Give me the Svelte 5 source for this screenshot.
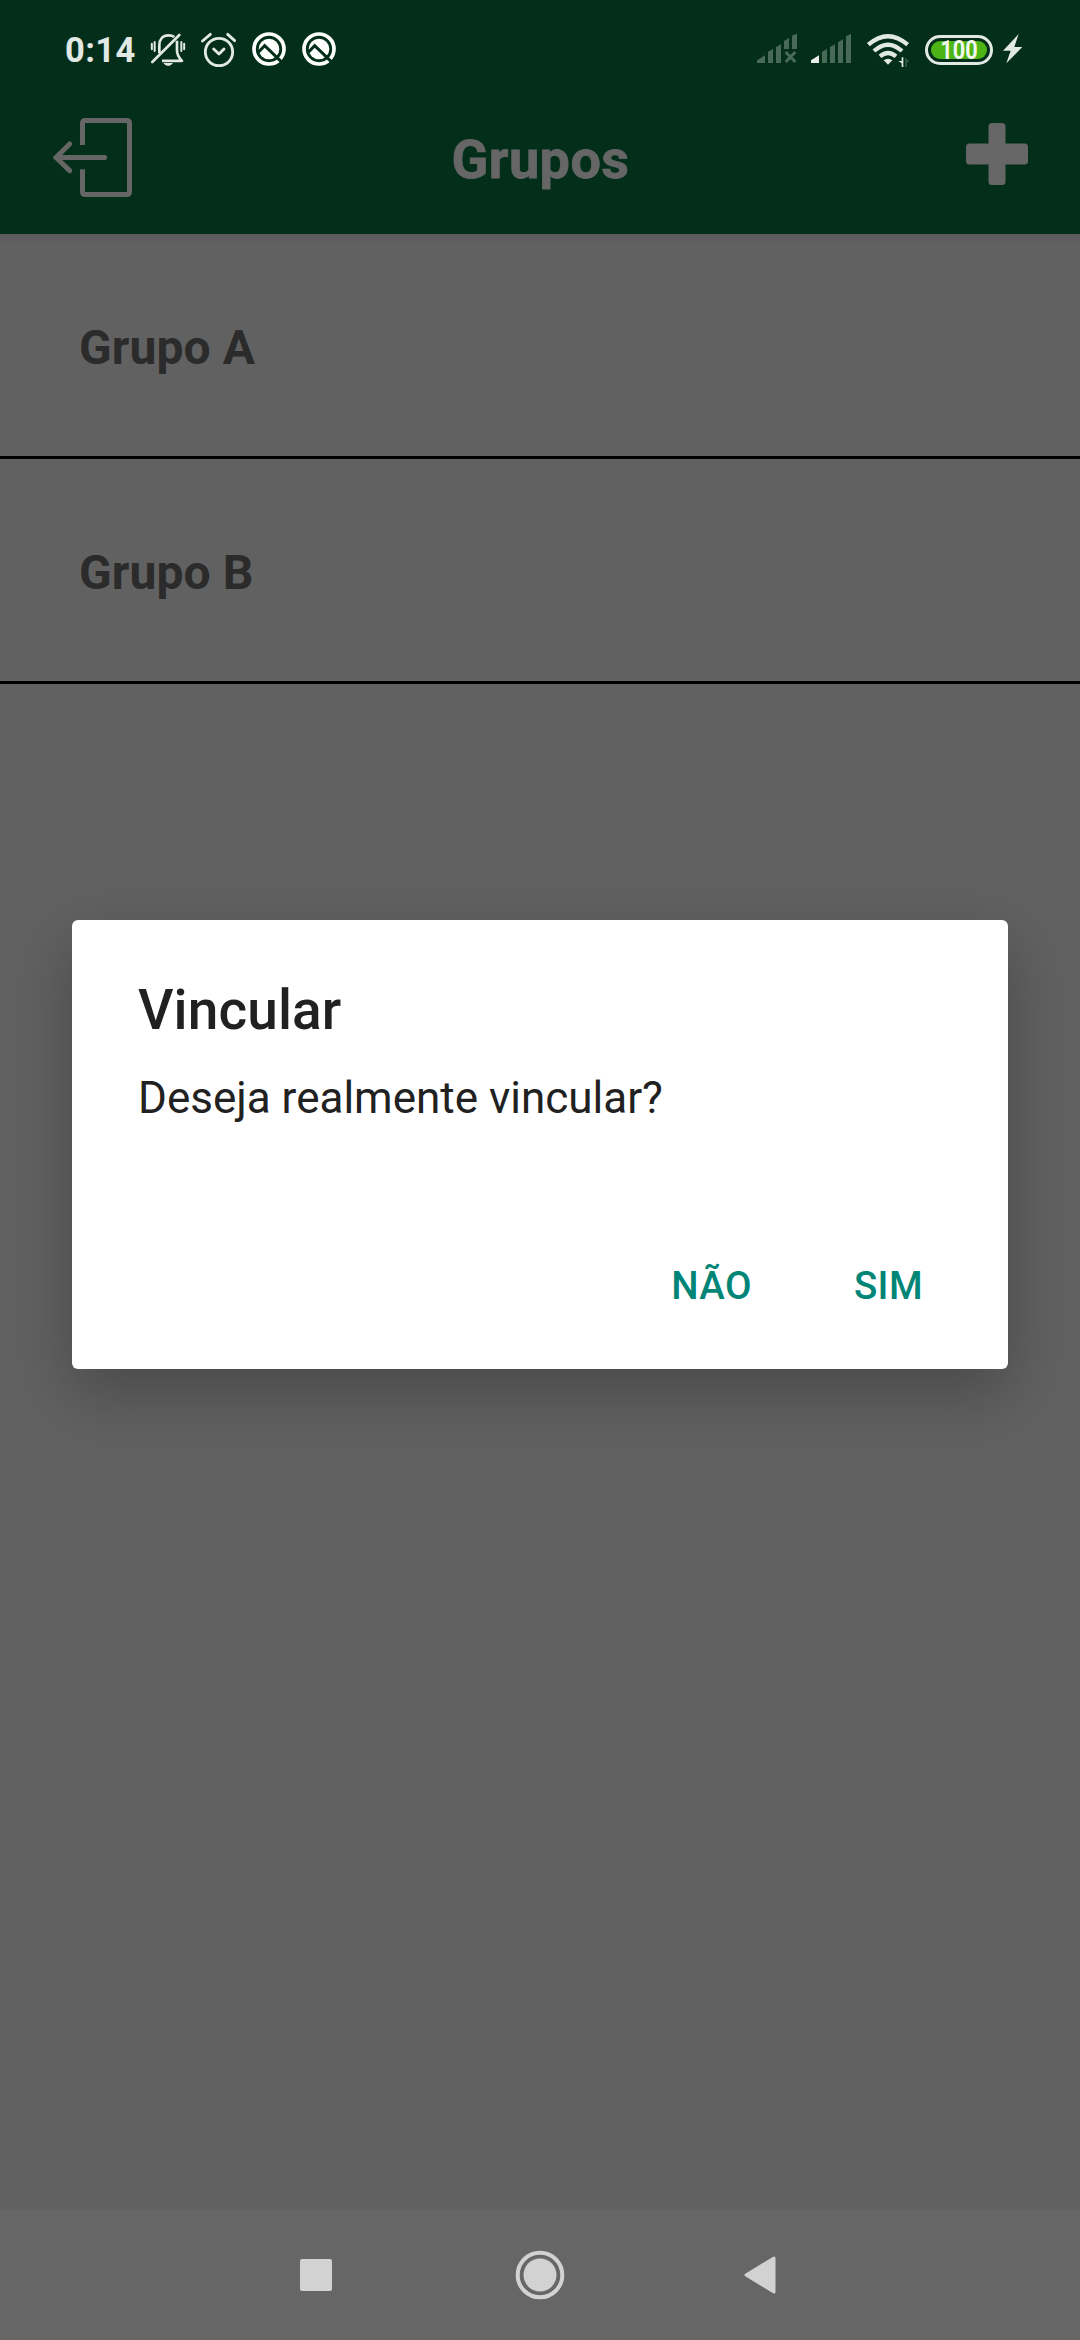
<script>
  const groups = ['Grupo A', 'Grupo B'];
  const notifications = [0, 1];
</script>

<div class="screen">
  <header>
    <div class="status">
      <span class="time">0:14</span>
      <svg class="bell" viewBox="330 60 108 120" width="36" height="40">
        <g fill="none" stroke="#e2e8e4" stroke-width="8">
          <path d="M358 130V106C358 88 368 76 385 76C392 76 398 77 403 81M411 92V122C411 134 416 142 426 152.500H366" stroke-linejoin="round" />
          <path d="M337 156L418 75" stroke-linecap="round" />
          <path d="M335.500 101v17M344 96v27M424 96v27M432.500 101v17" stroke-width="6" stroke-linecap="round" />
        </g>
        <path d="M370 159H399Q393 168 384.500 168Q376 168 370 159Z" fill="#e2e8e4" />
      </svg>
      <svg class="alarm" viewBox="480 60 111 120" width="37" height="40">
        <g fill="none" stroke="#e2e8e4" stroke-width="8.500" stroke-linecap="round" stroke-linejoin="round">
          <circle cx="537" cy="126" r="41" />
          <path d="M521 117L537 132L552 117M487.500 93L511 73M563 73L584 92" />
        </g>
      </svg>
      {#each notifications as n (n)}
        <svg class="badge" viewBox="636 60 102 120" width="34" height="40">
          <circle cx="687" cy="117" r="45" fill="none" stroke="#fff" stroke-width="11" />
          <circle cx="687" cy="117" r="31" fill="#fff" />
          <path d="M655 127L674 107L730 161" fill="none" stroke="#032f1a" stroke-width="9" />
        </svg>
      {/each}

      <div class="right">
        <svg class="signal" viewBox="48 60 126 120" width="42" height="40" fill="#4a6a58">
          <path d="M51 159V151L75 136V159ZM84 159V125L99 117V159ZM108 159V111L123 103V159ZM132 117V93L147 84V117ZM156 117V77L171 71V117Z" />
          <path d="M137 126L166 156M166 126L137 156" stroke="#4a6a58" stroke-width="9" />
        </svg>
        <svg class="signal" viewBox="210 60 126 120" width="42" height="40" fill="#4a6a58">
          <path d="M213 159V151L237 136V159Z" fill="#e8eeea" />
          <path d="M246 159V125L261 117V159ZM270 159V111L285 103V159ZM294 159V97L309 88V159ZM318 159V79L333 71V159Z" />
        </svg>
        <svg class="wifi" viewBox="378 60 132 120" width="44" height="40">
          <g fill="none" stroke="#e2e8e4" stroke-width="13">
            <path d="M385 104Q444 53 503 104M402 123Q444 85 486 123M420 139Q444 119 468 139" />
          </g>
          <path d="M431 151Q444 142 457 151L444 164Z" fill="#e2e8e4" />
          <path d="M485 142H490V171H485V160L475 153H485Z" fill="#e2e8e4" />
          <path d="M496 142L508 156H501V171H496Z" fill="#365846" />
        </svg>
        <div class="battery"><div class="level"><span>100</span></div></div>
        <svg class="bolt" viewBox="786 60 63 120" width="21" height="40">
          <path d="M836 72L789 122H812L799 160L847 111H823Z" fill="#e2e8e4" />
        </svg>
      </div>
    </div>

    <div class="bar">
      <svg class="exit" viewBox="69 54 237 237" width="79" height="79">
        <g fill="none" stroke="#666" stroke-width="15">
          <path d="M157.500 135V70Q157.500 61.500 166 61.500H290Q298.500 61.500 298.500 70V275Q298.500 283.500 290 283.500H166Q157.500 283.500 157.500 275V208" />
          <path d="M78 172.500H224M119 132L78 172.500L119 212" stroke-linecap="round" />
        </g>
      </svg>
      <h1>Grupos</h1>
      <svg class="plus" viewBox="0 0 62 62" width="62" height="62" fill="#666">
        <rect x="22.500" y="0" width="17" height="62" rx="3.500" />
        <rect x="0" y="20.500" width="62" height="21" rx="3.500" />
      </svg>
    </div>
  </header>

  <main>
    {#each groups as group (group)}
      <div class="row">{group}</div>
    {/each}
  </main>

  <nav>
    <svg viewBox="0 0 32 32" width="32" height="32"><rect width="32" height="32" rx="2" fill="#d2d2d2" /></svg>
    <svg class="home" viewBox="0 0 50 50" width="50" height="50">
      <circle cx="25" cy="25" r="22.300" fill="none" stroke="#d2d2d2" stroke-width="4" />
      <circle cx="25" cy="25" r="16.500" fill="#d2d2d2" />
    </svg>
    <svg viewBox="0 0 32 38" width="32" height="38">
      <path d="M2 19L30 2V36Z" fill="#d2d2d2" stroke="#d2d2d2" stroke-width="3" stroke-linejoin="round" />
    </svg>
  </nav>

  <section class="dialog" role="alertdialog">
    <h2>Vincular</h2>
    <p>Deseja realmente vincular?</p>
    <div class="actions">
      <button>NÃO</button>
      <button>SIM</button>
    </div>
  </section>
</div>

<style>
  :global(body) {
    margin: 0;
    background: #616161;
  }
  .screen {
    position: relative;
    display: flex;
    flex-direction: column;
    width: 1080px;
    height: 2340px;
    overflow: hidden;
    background: #616161;
    font-family: Roboto, sans-serif;
  }
  svg {
    display: block;
    flex: none;
  }
  header {
    height: 234px;
    background: #032f1a;
  }
  .status {
    display: flex;
    align-items: center;
    box-sizing: border-box;
    height: 100px;
    padding: 0 57px 0 65px;
  }
  .time {
    width: 85px;
    font-size: 34.5px;
    font-weight: 700;
    letter-spacing: 0.4px;
    color: #e2e8e4;
  }
  .alarm {
    margin-left: 14px;
  }
  .badge {
    margin-left: 16px;
  }
  .alarm + .badge {
    margin-left: 15px;
  }
  .right {
    display: flex;
    align-items: center;
    margin-left: auto;
  }
  .signal + .signal {
    margin-left: 12px;
  }
  .wifi {
    margin-left: 14px;
  }
  .battery {
    box-sizing: border-box;
    width: 68px;
    height: 30px;
    margin: 0 9px 0 15px;
    padding: 3px;
    border: 3px solid #e2e8e4;
    border-radius: 15px;
  }
  .level {
    display: flex;
    justify-content: center;
    height: 18px;
    border-radius: 9px;
    background: #4cb515;
  }
  .level span {
    color: #f2f8ee;
    font-size: 25.5px;
    font-weight: 700;
    line-height: 19px;
    transform: scaleX(0.85);
  }
  .bar {
    display: grid;
    grid-template-columns: 1fr auto 1fr;
    align-items: start;
    padding: 18px 52px 0 53px;
  }
  h1 {
    margin: 10px 0 0;
    font-size: 54px;
    line-height: 64px;
    letter-spacing: 0.4px;
    color: #666;
    -webkit-text-stroke: 0.8px #666;
  }
  .plus {
    margin-top: 5px;
    justify-self: end;
  }
  main {
    flex: 1;
    background: linear-gradient(#595959, #616161 9px);
  }
  .row {
    display: flex;
    align-items: center;
    box-sizing: border-box;
    height: 225px;
    padding: 4px 79px 0;
    border-bottom: 3px solid #000;
    font-size: 48px;
    font-weight: 700;
    letter-spacing: 0.1px;
    color: #2b2b2b;
  }
  nav {
    display: flex;
    align-items: center;
    box-sizing: border-box;
    height: 130px;
    padding-left: 300px;
    background: #666;
  }
  .home {
    margin: 0 179px 0 183px;
  }
  .dialog {
    position: absolute;
    top: 920px;
    left: 72px;
    box-sizing: border-box;
    width: 936px;
    height: 449px;
    padding: 58px 66px 0;
    border-radius: 6px;
    background: #fff;
    box-shadow: 0 24px 64px rgba(0, 0, 0, 0.25);
    color: #212121;
  }
  h2 {
    margin: 0;
    font-size: 55px;
    font-weight: 500;
    line-height: 64px;
    letter-spacing: 0.1px;
  }
  p {
    margin: 30px 0 0;
    font-size: 44px;
    line-height: 52px;
  }
  .actions {
    display: flex;
    justify-content: flex-end;
    gap: 22px;
    margin: 99px -21px 0 0;
  }
  button {
    padding: 40px;
    border: 0;
    background: none;
    font: 500 38.5px/46px Roboto, sans-serif;
    letter-spacing: 0.4px;
    color: #008577;
  }
</style>
